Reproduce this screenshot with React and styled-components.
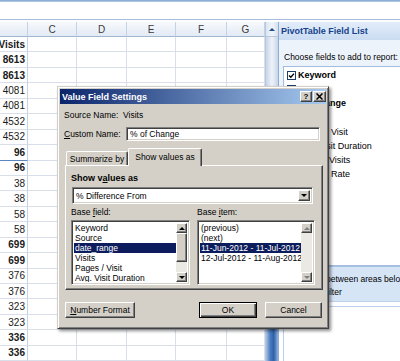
import React from 'react';
import styled, { createGlobalStyle, css } from 'styled-components';

const GlobalStyle = createGlobalStyle`
  * { box-sizing: border-box; }
  body {
    margin: 0;
    background: #fff;
    font-family: "Liberation Sans", Arial, sans-serif;
  }
`;

const raised = css`
  border: 1px solid;
  border-color: #fff #404040 #404040 #fff;
  box-shadow: inset -1px -1px #808080;
  background: #d4d0c8;
`;

const sunken = css`
  border: 1px solid;
  border-color: #808080 #fff #fff #808080;
  box-shadow: inset 1px 1px #404040, inset -1px -1px #d4d0c8;
  background: #fff;
`;

const Screen = styled.div`
  position: relative;
  width: 400px;
  height: 361px;
  overflow: hidden;
  background: #fff;
  display: flex;
  flex-direction: column;
`;

const FormulaStrip = styled.div`
  height: 22px;
  flex: none;
  background: linear-gradient(
    #7fa3cf 0, #bcd0ea 2px, #fff 2px, #fff 19px,
    #a7bdd9 19px, #a7bdd9 20px, #fff 20px
  );
`;

const Main = styled.div`
  flex: 1;
  display: flex;
  min-height: 0;
`;

/* ---------- worksheet ---------- */

const Sheet = styled.div`
  width: 265px;
  flex: none;
  display: grid;
  grid-template-columns: 28px 49px 50px 49px 51px 38px;
  grid-template-rows: 15px;
  grid-auto-rows: 15.45px;
  align-content: start;
  overflow: hidden;
`;

const ColHead = styled.div`
  background: linear-gradient(#f7f9fc, #e2eaf5);
  border-right: 1px solid #c3d2e4;
  border-bottom: 1px solid #9eb6ce;
  color: #3a3a3a;
  font-size: 10px;
  display: flex;
  align-items: center;
  justify-content: center;
`;

const Cell = styled.div`
  border-right: 1px solid #d9dfe8;
  border-bottom: 1px solid #d9dfe8;
`;

const NumCell = styled(Cell)`
  font-size: 10px;
  font-weight: ${p => (p.$bold ? 'bold' : 'normal')};
  color: #1a1a1a;
  display: flex;
  align-items: center;
  justify-content: flex-end;
  padding-right: 2px;
  border-right-color: #c3d2e4;
  ${p => p.$total && css`border-bottom: 1px solid #5b86c0;`}
`;

const VScroll = styled.div`
  width: 13px;
  flex: none;
  display: flex;
  flex-direction: column;
  background: #d3deec;
  border-left: 1px solid #b7c8de;
`;

const ScrollArrow = styled.div`
  height: 15px;
  display: flex;
  align-items: center;
  justify-content: center;
  background: linear-gradient(90deg, #dbe6f3, #f1f5fa, #d5e1f0);
  border-bottom: 1px solid #b7c8de;
`;

const ScrollTrack = styled.div`
  flex: 1;
  background: linear-gradient(90deg, #c7d5e8, #eef3f9 50%, #c7d5e8);
`;

const ScrollThumb = styled.div`
  height: 40px;
  background: linear-gradient(90deg, #a9c4e6, #4a7cc0 35%, #2f61a8 65%, #8fb1dc);
`;

/* ---------- pivot pane ---------- */

const Pane = styled.div`
  flex: 1;
  display: flex;
  flex-direction: column;
  background: #edf3fb;
  border-left: 1px solid #8eaed8;
  font-size: 8.5px;
  color: #000;
  min-width: 0;
`;

const PaneHead = styled.div`
  height: 18px;
  flex: none;
  display: flex;
  align-items: center;
  padding-left: 2px;
  background: linear-gradient(#e3edf9, #cadcf2);
  color: #15428b;
  font-weight: bold;
  font-size: 9px;
  white-space: nowrap;
`;

const PaneHint = styled.div`
  height: 26px;
  flex: none;
  display: flex;
  align-items: center;
  padding: 8px 0 0 5px;
  white-space: nowrap;
`;

const FieldBox = styled.div`
  height: 200px;
  flex: none;
  margin-left: 4px;
  background: #fff;
  border: 1px solid #a3bddf;
  border-right: none;
  padding-top: 1px;
`;

const FieldItem = styled.div`
  height: 14.2px;
  display: flex;
  align-items: center;
  gap: 2px;
  padding-left: 3px;
  font-size: 9px;
  font-weight: ${p => (p.$on ? 'bold' : 'normal')};
  white-space: nowrap;
`;

const DragBand = styled.div`
  height: 36px;
  flex: none;
  background: #d6e5f6;
  border-top: 1px solid #a8c2e4;
  border-bottom: 1px solid #bdd1ea;
  padding: 7px 0 0 4px;
  display: flex;
  flex-direction: column;
  gap: 3px;
  white-space: nowrap;
  overflow: hidden;
`;

const AreaLabel = styled.div`
  display: flex;
  align-items: center;
  gap: 3px;
`;

const Areas = styled.div`
  flex: 1;
  background: #fff;
  padding: 4px 0 0 4px;
  display: flex;
`;

const AreaBox = styled.div`
  flex: 1;
  border: 1px solid #bcd0e9;
  border-right: none;
  border-bottom: none;
`;

/* ---------- dialog ---------- */

const Dialog = styled.div`
  position: absolute;
  left: 57px;
  top: 86px;
  width: 272px;
  height: 243px;
  background: #d4d0c8;
  border: 1px solid;
  border-color: #d4d0c8 #404040 #404040 #d4d0c8;
  box-shadow: inset 1px 1px #fff, inset -1px -1px #808080, 2px 2px 3px rgba(0, 0, 0, 0.45);
  padding: 2px;
  display: flex;
  flex-direction: column;
  font-size: 8.5px;
  color: #000;
`;

const TitleBar = styled.div`
  height: 15px;
  flex: none;
  display: flex;
  align-items: center;
  gap: 1px;
  padding: 0 0 0 2px;
  background: linear-gradient(90deg, #0a246a, #a6caf0);
  color: #fff;
  font-weight: bold;
  font-size: 9px;
`;

const TitleText = styled.div`
  flex: 1;
  min-width: 0;
  white-space: nowrap;
  overflow: hidden;
`;

const TitleBtn = styled.div`
  ${raised};
  width: ${p => p.$w || 12}px;
  height: 11px;
  display: flex;
  align-items: center;
  justify-content: center;
  color: #000;
  font-size: 8px;
  font-weight: bold;
  line-height: 9px;
`;

const Row = styled.div`
  height: 14px;
  flex: none;
  margin-top: ${p => p.$mt}px;
  padding-left: 4px;
  display: flex;
  align-items: center;
`;

const Label = styled.div`
  width: ${p => p.$w}px;
  flex: none;
  white-space: nowrap;
`;

const TextInput = styled.div`
  ${sunken};
  width: 194px;
  height: 14px;
  display: flex;
  align-items: center;
  padding-left: 3px;
`;

const TabStrip = styled.div`
  height: 17px;
  flex: none;
  margin-top: 7px;
  padding-left: 6px;
  display: flex;
  align-items: flex-end;
`;

const Tab = styled.div`
  position: relative;
  background: #d4d0c8;
  border: 1px solid;
  border-color: #fff #404040 transparent #fff;
  border-bottom: none;
  border-radius: 2px 2px 0 0;
  box-shadow: inset -1px 0 #808080;
  display: flex;
  align-items: center;
  justify-content: center;
  white-space: nowrap;
  width: ${p => (p.$active ? 74 : 62)}px;
  height: ${p => (p.$active ? 18 : 14)}px;
  ${p => p.$active && css`
    margin-bottom: -1px;
    z-index: 1;
    padding-bottom: 2px;
  `}
`;

const TabPanel = styled.div`
  width: 258px;
  height: 125px;
  flex: none;
  margin-left: 5px;
  border: 1px solid;
  border-color: #fff #404040 #404040 #fff;
  box-shadow: inset -1px -1px #808080;
  padding-left: 5px;
  display: flex;
  flex-direction: column;
`;

const Heading = styled.div`
  height: 12px;
  margin-top: 6px;
  font-weight: bold;
  font-size: 9px;
  display: flex;
  align-items: center;
`;

const Dropdown = styled.div`
  ${sunken};
  width: 241px;
  height: 17px;
  margin: 3px 0 0 1px;
  display: flex;
  align-items: center;
  padding: 2px 2px 2px 3px;
`;

const DropText = styled.div`
  flex: 1;
`;

const ArrowBtn = styled.div`
  ${raised};
  width: ${p => p.$w || 11}px;
  height: ${p => p.$h || 11}px;
  flex: none;
  display: flex;
  align-items: center;
  justify-content: center;
`;

const Tri = styled.span`
  width: 0;
  height: 0;
  border-left: 3px solid transparent;
  border-right: 3px solid transparent;
  ${p => (p.$up
    ? css`border-bottom: 3px solid ${p.$color || '#000'};`
    : css`border-top: 3px solid ${p.$color || '#000'};`)}
`;

const Pair = styled.div`
  display: flex;
  gap: 7px;
  margin-top: ${p => p.$mt}px;
  height: ${p => p.$h}px;
  flex: none;
`;

const ListBox = styled.div`
  ${sunken};
  width: ${p => p.$w}px;
  height: 65px;
  padding: 2px;
  display: flex;
  overflow: hidden;
`;

const Items = styled.div`
  flex: 1;
  min-width: 0;
  overflow: hidden;
`;

const Item = styled.div`
  height: 10px;
  line-height: 10px;
  padding-left: 1px;
  white-space: nowrap;
  background: ${p => (p.$sel ? '#0c1c5c' : 'transparent')};
  color: ${p => (p.$sel ? '#fff' : '#000')};
`;

const ListScroll = styled.div`
  width: 11px;
  flex: none;
  display: flex;
  flex-direction: column;
`;

const ListThumb = styled.div`
  ${raised};
  height: 29px;
  flex: none;
`;

const ListTrack = styled.div`
  flex: 1;
  background: #ebe9e4;
`;

const ButtonRow = styled.div`
  display: flex;
  gap: 8px;
  margin-top: 12px;
  padding: 0 4px 0 5px;
  height: 16px;
  flex: none;
`;

const Spacer = styled.div`
  flex: 1;
`;

const Button = styled.div`
  ${raised};
  width: ${p => p.$w}px;
  height: 16px;
  display: flex;
  align-items: center;
  justify-content: center;
  white-space: nowrap;
  ${p => p.$default && css`
    border: 1px solid #000;
    box-shadow: inset 1px 1px #fff, inset -1px -1px #404040, inset -2px -2px #808080;
  `}
`;

const CheckIcon = ({ on }) => (
  <svg width="9" height="9" viewBox="0 0 9 9">
    <rect x="0.5" y="0.5" width="8" height="8" fill="#fff" stroke="#1e3c6e" />
    {on && <polyline points="2,4.5 3.8,6.3 7,2.6" fill="none" stroke="#000" strokeWidth="1.4" />}
  </svg>
);

const CloseIcon = () => (
  <svg width="7" height="7" viewBox="0 0 7 7">
    <path d="M0.5 0.5L6.5 6.5M6.5 0.5L0.5 6.5" stroke="#000" strokeWidth="1.5" />
  </svg>
);

const FilterIcon = () => (
  <svg width="9" height="9" viewBox="0 0 9 9">
    <path d="M0.5 1h8L5.5 4.5V8L3.5 7V4.5z" fill="#6b8fc4" stroke="#2b4f88" strokeWidth="0.7" />
  </svg>
);

const values = [
  ['Visits', true], ['8613', true], ['8613', true], ['4081'], ['4081'], ['4532'], ['4532'],
  ['96', true, true], ['96', true], ['38'], ['38'], ['58'], ['58'], ['699', true], ['699', true],
  ['376'], ['376'], ['323'], ['323'], ['336', true], ['336', true],
];

const fields = [
  ['Keyword', true], ['Source'], ['date_range', true], ['Visits'], ['Pages / Visit'],
  ['Avg. Visit Duration'], ['% New Visits'], ['Bounce Rate'],
];

export default function App() {
  return (
    <Screen>
      <GlobalStyle />
      <FormulaStrip />
      <Main>
        <Sheet>
          {['', 'C', 'D', 'E', 'F', 'G'].map((c, i) => (
            <ColHead key={i}>{c}</ColHead>
          ))}
          {values.map(([v, bold, total], r) => (
            <React.Fragment key={r}>
              <NumCell $bold={bold} $total={total}>{v}</NumCell>
              <Cell /><Cell /><Cell /><Cell /><Cell />
            </React.Fragment>
          ))}
        </Sheet>
        <VScroll>
          <ScrollArrow><Tri $up $color="#1f4a8a" /></ScrollArrow>
          <ScrollTrack />
          <ScrollThumb />
        </VScroll>
        <Pane>
          <PaneHead>PivotTable Field List</PaneHead>
          <PaneHint>Choose fields to add to report:</PaneHint>
          <FieldBox>
            {fields.map(([f, on]) => (
              <FieldItem key={f} $on={on}>
                <CheckIcon on={on} />
                {f}
              </FieldItem>
            ))}
          </FieldBox>
          <DragBand>
            <div>Drag fields between areas below:</div>
            <AreaLabel><FilterIcon />Report Filter</AreaLabel>
          </DragBand>
          <Areas>
            <AreaBox />
          </Areas>
        </Pane>
      </Main>

      <Dialog>
        <TitleBar>
          <TitleText>Value Field Settings</TitleText>
          <TitleBtn>?</TitleBtn>
          <TitleBtn $w={13}><CloseIcon /></TitleBtn>
        </TitleBar>
        <Row $mt={4}>
          <Label $w={59}>Source Name:</Label>
          <span>Visits</span>
        </Row>
        <Row $mt={5}>
          <Label $w={62}><u>C</u>ustom Name:</Label>
          <TextInput>% of Change</TextInput>
        </Row>
        <TabStrip>
          <Tab>Summarize by</Tab>
          <Tab $active>Show values as</Tab>
        </TabStrip>
        <TabPanel>
          <Heading>Show v<u>a</u>lues as</Heading>
          <Dropdown>
            <DropText>% Difference From</DropText>
            <ArrowBtn $w={12} $h={11}><Tri /></ArrowBtn>
          </Dropdown>
          <Pair $mt={3} $h={12}>
            <Label $w={119}>Base <u>f</u>ield:</Label>
            <Label $w={118}>Base <u>i</u>tem:</Label>
          </Pair>
          <Pair $mt={1} $h={65}>
            <ListBox $w={119}>
              <Items>
                <Item>Keyword</Item>
                <Item>Source</Item>
                <Item $sel>date_range</Item>
                <Item>Visits</Item>
                <Item>Pages / Visit</Item>
                <Item>Avg. Visit Duration</Item>
              </Items>
              <ListScroll>
                <ArrowBtn $h={10}><Tri $up /></ArrowBtn>
                <ListThumb />
                <ListTrack />
                <ArrowBtn $h={10}><Tri /></ArrowBtn>
              </ListScroll>
            </ListBox>
            <ListBox $w={118}>
              <Items>
                <Item>(previous)</Item>
                <Item>(next)</Item>
                <Item $sel>11-Jun-2012 - 11-Jul-2012</Item>
                <Item>12-Jul-2012 - 11-Aug-2012</Item>
              </Items>
              <ListScroll>
                <ArrowBtn $h={10}><Tri $up $color="#808080" /></ArrowBtn>
                <ListTrack />
                <ArrowBtn $h={10}><Tri $color="#808080" /></ArrowBtn>
              </ListScroll>
            </ListBox>
          </Pair>
        </TabPanel>
        <ButtonRow>
          <Button $w={70}><u>N</u>umber Format</Button>
          <Spacer />
          <Button $w={58} $default>OK</Button>
          <Button $w={57}>Cancel</Button>
        </ButtonRow>
      </Dialog>
    </Screen>
  );
}
